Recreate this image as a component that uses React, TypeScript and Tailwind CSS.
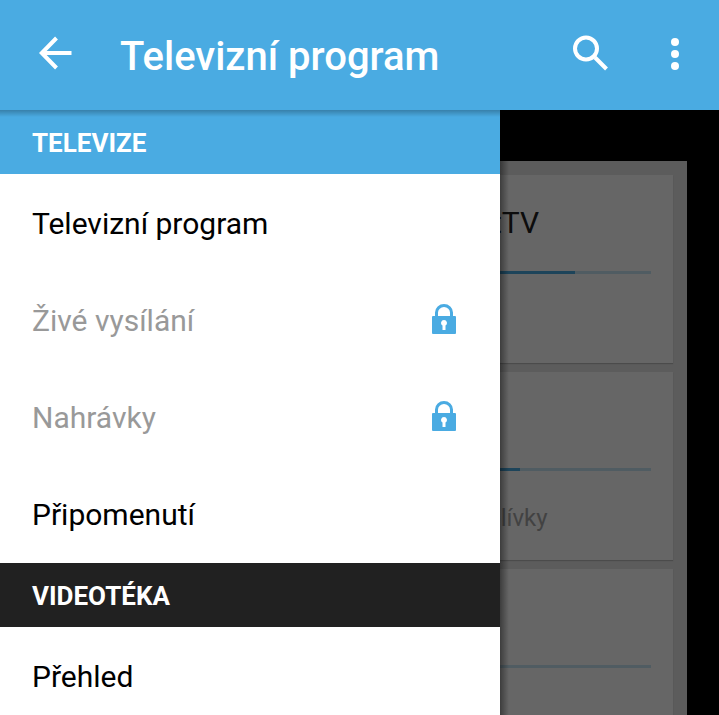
import React from "react";

type MenuItem = { label: string; locked?: boolean };
type MenuSection = { title: string; active?: boolean; items: MenuItem[] };
type Programme = { channel: string; show: string; progress: number };

const sections: MenuSection[] = [
  {
    title: "TELEVIZE",
    active: true,
    items: [
      { label: "Televizní program" },
      { label: "Živé vysílání", locked: true },
      { label: "Nahrávky", locked: true },
      { label: "Připomenutí" },
    ],
  },
  { title: "VIDEOTÉKA", items: [{ label: "Přehled" }] },
];

const programmes: Programme[] = [
  { channel: "tTV", show: "", progress: 87 },
  { channel: "", show: "olívky", progress: 77.6 },
  { channel: "", show: "", progress: 0 },
];

function BackIcon() {
  return (
    <svg width="34" height="34" viewBox="0 0 34 34" fill="none" stroke="#fff" strokeWidth="4" aria-hidden="true">
      <path d="M17.500 2 2.800 17l14.700 15M3.500 17H32.500" />
    </svg>
  );
}

function SearchIcon() {
  return (
    <svg width="36" height="36" viewBox="0 0 36 36" fill="none" stroke="#fff" strokeWidth="4" aria-hidden="true">
      <circle cx="13" cy="13.500" r="11" />
      <path d="M22 22.500 33.500 34" />
    </svg>
  );
}

function MoreIcon() {
  return (
    <svg width="8" height="32" viewBox="0 0 8 32" fill="#fff" aria-hidden="true">
      <circle cx="4" cy="4" r="4" />
      <circle cx="4" cy="16" r="4" />
      <circle cx="4" cy="28" r="4" />
    </svg>
  );
}

function LockIcon() {
  return (
    <svg className="mb-1" width="24" height="30" viewBox="0 0 24 30" aria-hidden="true">
      <path d="M4.500 13V8.500a7.500 7 0 0 1 15 0V13" fill="none" stroke="#4aabe2" strokeWidth="3" />
      <rect y="12" width="24" height="18" rx="1" fill="#4aabe2" />
      <path d="M12 16a3 3 0 0 1 1.500 5.600V26h-3v-4.400A3 3 0 0 1 12 16Z" fill="#fff" />
    </svg>
  );
}

function TopBar() {
  return (
    <header className="z-10 flex h-[110px] shrink-0 items-center bg-[#4aabe2] pr-5 text-white">
      <button type="button" aria-label="Zpět" className="ml-4 flex h-20 w-20 items-center justify-center pb-1">
        <BackIcon />
      </button>
      <h1 className="ml-6 flex-1 truncate pt-1 text-[40px] leading-[48px] font-medium">Televizní program</h1>
      <button type="button" aria-label="Hledat" className="flex h-20 w-20 items-center justify-center pb-1">
        <SearchIcon />
      </button>
      <button type="button" aria-label="Další možnosti" className="ml-5 flex h-20 w-12 items-center justify-center pb-[2px]">
        <MoreIcon />
      </button>
    </header>
  );
}

function ProgrammeCard({ channel, show, progress }: Programme) {
  return (
    <article className="h-[188px] shrink-0 bg-white px-[22px] pt-7 shadow-[0_1px_1px_#bbbbbb]">
      <h2 className="h-10 pl-[424px] text-[30px] leading-10 whitespace-nowrap text-[#212121]">{channel}</h2>
      <div className="mt-7 h-[3px] bg-[#c8e5f5]">
        <div className="h-full bg-[#4aabe2]" style={{ width: `${progress}%` }} />
      </div>
      <p className="mt-[31px] pl-[419px] text-[24px] leading-8 whitespace-nowrap text-[#a6a6a6]">{show}</p>
    </article>
  );
}

function Drawer() {
  return (
    <nav
      aria-label="Hlavní nabídka"
      className="absolute inset-y-0 left-0 w-[500px] max-w-full bg-white"
    >
      {sections.map((section) => (
        <section key={section.title}>
          <h2
            className={`flex h-16 items-center px-8 pt-[2px] text-[26px] leading-8 font-bold text-white ${
              section.active ? "bg-[#4aabe2]" : "bg-[#212121]"
            }`}
          >
            {section.title}
          </h2>
          <ul className="pb-px">
            {section.items.map((item) => (
              <li key={item.label}>
                <button
                  type="button"
                  disabled={item.locked}
                  className="flex h-[97px] w-full items-center justify-between pt-[2px] pr-11 pl-8 text-left text-[30px] leading-10 text-black disabled:text-[#999999]"
                >
                  {item.label}
                  {item.locked && <LockIcon />}
                </button>
              </li>
            ))}
          </ul>
        </section>
      ))}
      <div className="absolute inset-x-0 top-0 h-[7px] bg-linear-to-b from-black/25 to-transparent" />
      <div className="absolute inset-y-0 left-full w-[9px] bg-linear-to-r from-black/40 to-transparent" />
    </nav>
  );
}

export default function App() {
  return (
    <div className="flex h-screen flex-col overflow-hidden bg-black font-[Roboto,sans-serif]">
      <TopBar />
      <div className="relative flex min-h-0 flex-1 flex-col overflow-hidden">
        <main className="mx-8 mt-[51px] flex min-h-0 flex-1 flex-col gap-[9px] overflow-hidden bg-[#e6e6e6] p-[14px]">
          {programmes.map((programme, index) => (
            <ProgrammeCard key={index} {...programme} />
          ))}
        </main>
        <div className="absolute inset-0 bg-black/60" />
        <Drawer />
      </div>
    </div>
  );
}
